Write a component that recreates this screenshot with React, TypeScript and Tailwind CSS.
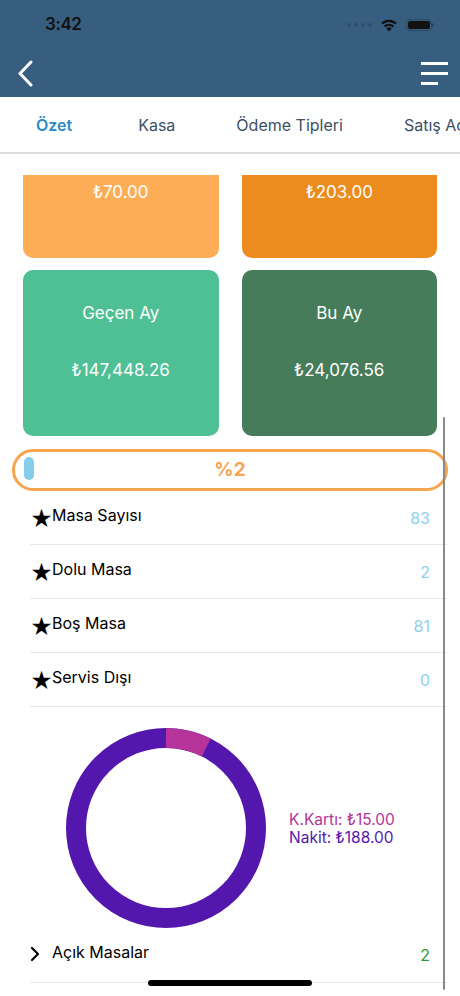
import React from "react";

// Summary dashboard (Özet) mock
const stats = [
  { label: "Masa Sayısı", value: "83" },
  { label: "Dolu Masa", value: "2" },
  { label: "Boş Masa", value: "81" },
  { label: "Servis Dışı", value: "0" },
];

const tabs = [
  { label: "Özet", gap: "ml-[36px]" },
  { label: "Kasa", gap: "ml-[66px]" },
  { label: "Ödeme Tipleri", gap: "ml-[61px]" },
  { label: "Satış Adetleri", gap: "ml-[61px]" },
];

function Donut() {
  const r = 90;
  const c = 2 * Math.PI * r;
  const card = 15 / 203;
  return (
    <svg width="200" height="200" viewBox="0 0 200 200">
      <g transform="rotate(-90 100 100)">
        <circle cx="100" cy="100" r={r} fill="none" stroke="#5417ad" strokeWidth="20" />
        <circle
          cx="100"
          cy="100"
          r={r}
          fill="none"
          stroke="#b5339b"
          strokeWidth="20"
          strokeDasharray={`${c * card} ${c}`}
        />
      </g>
    </svg>
  );
}

function Card({ title, value, color }: { title?: string; value: string; color: string }) {
  return (
    <div className={`h-[166px] rounded-[10px] flex flex-col items-center pt-[32px] text-white text-[17px] leading-[22px] ${color}`}>
      <div className="h-[22px]">{title}</div>
      <div className="mt-[35px]">{value}</div>
    </div>
  );
}

export default function App() {
  return (
    <div
      className="relative w-[460px] h-[996px] overflow-hidden bg-white"
      style={{ fontFamily: "Inter, 'Noto Sans', sans-serif" }}
    >
      {/* Header */}
      <div className="h-[97px] bg-[#375e7f]">
        <div className="h-[50px] flex items-center justify-between pl-[45px] pr-[26px]">
          <span className="text-[17px] font-semibold text-[#111] tracking-tight">3:42</span>
          <div className="flex items-center gap-[6px]">
            <div className="flex gap-[3px] mr-[2px]">
              {[0, 1, 2, 3].map((i) => (
                <span key={i} className="w-[4px] h-[4px] rounded-full bg-[#30506b]" />
              ))}
            </div>
            <svg width="18" height="13" viewBox="0 0 18 13">
              <path d="M9 12.5 L6.3 9.4 A4 4 0 0 1 11.7 9.4 Z" fill="#111" />
              <path d="M3.9 6.8 A7.4 7.4 0 0 1 14.1 6.8 L12.6 8.4 A5.3 5.3 0 0 0 5.4 8.4 Z" fill="#111" />
              <path d="M1.3 4 A11 11 0 0 1 16.7 4 L15.2 5.6 A8.8 8.8 0 0 0 2.8 5.6 Z" fill="#111" />
            </svg>
            <div className="flex items-center ml-[2px]">
              <div className="w-[26px] h-[12px] rounded-[4px] border border-[#2b4862] p-[1px]">
                <div className="w-full h-full rounded-[2px] bg-[#111]" />
              </div>
              <div className="w-[2px] h-[4px] rounded-r bg-[#2b4862]" />
            </div>
          </div>
        </div>
        <div className="h-[47px] flex items-start justify-between pl-[17px] pr-[12px] pt-[10px]">
          <svg width="18" height="27" viewBox="0 0 18 27">
            <path d="M14 2 L3 13.5 L14 25" fill="none" stroke="white" strokeWidth="3" strokeLinecap="round" strokeLinejoin="round" />
          </svg>
          <div className="flex flex-col gap-[7px] pt-[2px]">
            <span className="block w-[27px] h-[3px] bg-white" />
            <span className="block w-[27px] h-[3px] bg-white" />
            <span className="block w-[17px] h-[3px] bg-white" />
          </div>
        </div>
      </div>

      {/* Tabs */}
      <div className="h-[57px] border-b-2 border-[#dddddd] flex items-center overflow-hidden whitespace-nowrap text-[16px]">
        {tabs.map((t, i) => (
          <span
            key={t.label}
            className={`${t.gap} shrink-0 ${i === 0 ? "font-semibold text-[#2a8ac4]" : "text-[#3d4f63]"}`}
          >
            {t.label}
          </span>
        ))}
      </div>

      {/* Scroll content */}
      <div className="mt-[21px] h-[819px] overflow-hidden">
        <div className="-mt-[83px] px-[23px] grid grid-cols-2 gap-x-[23px] gap-y-[12px]">
          <Card value="₺70.00" color="bg-[#fdad56]" />
          <Card value="₺203.00" color="bg-[#ec8b1e]" />
          <Card title="Geçen Ay" value="₺147,448.26" color="bg-[#4fbf95]" />
          <Card title="Bu Ay" value="₺24,076.56" color="bg-[#467c59]" />
        </div>

        <div className="mt-[13px] mx-[12px] h-[42px] rounded-full border-[3px] border-[#f7a44e] relative flex items-center justify-center">
          <div className="absolute left-[9px] top-[5px] w-[10px] h-[23px] rounded-full bg-[#86cdeb]" />
          <span className="text-[19px] font-bold text-[#f5a450]">%2</span>
        </div>

        <div className="ml-[30px] mr-[13px]">
          {stats.map((s) => (
            <div key={s.label} className="h-[54px] border-b border-[#e6e6e6] flex items-center pr-[17px]">
              <span className="text-[22px] leading-none text-black mt-[2px] w-[22px]">★</span>
              <span className="text-[16px] text-black -mt-[5px]">{s.label}</span>
              <span className="ml-auto text-[16px] text-[#8fd0ea]">{s.value}</span>
            </div>
          ))}
        </div>

        <div className="flex items-center pl-[66px] pt-[21px] h-[220px]">
          <Donut />
          <div className="ml-[23px] mt-[2px] text-[15.5px] leading-[18px]">
            <div className="text-[#b5339b]">K.Kartı: ₺15.00</div>
            <div className="text-[#5417ad]">Nakit: ₺188.00</div>
          </div>
        </div>

        <div className="ml-[30px] mr-[13px] h-[56px] border-b border-[#e6e6e6] flex items-center pr-[17px]">
          <svg width="10" height="16" viewBox="0 0 10 16" className="-mt-[2px]">
            <path d="M2 2 L8 8 L2 14" fill="none" stroke="black" strokeWidth="2.2" strokeLinecap="round" strokeLinejoin="round" />
          </svg>
          <span className="ml-[12px] -mt-[5px] text-[16px] text-black">Açık Masalar</span>
          <span className="ml-auto text-[16px] text-[#2f9a2f] mt-[1px]">2</span>
        </div>
      </div>

      {/* Scroll indicator */}
      <div className="absolute left-[443px] top-[417px] w-[2px] h-[573px] bg-[#8a8a8a] rounded-full" />
      {/* Home indicator */}
      <div className="absolute left-[148px] top-[980px] w-[164px] h-[6px] rounded-full bg-black" />
    </div>
  );
}
